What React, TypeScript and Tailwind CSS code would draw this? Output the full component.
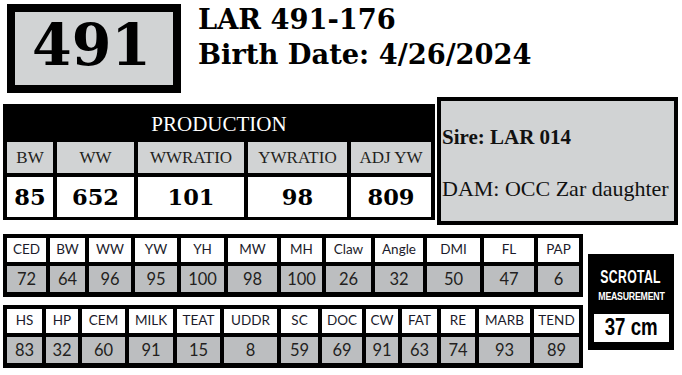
import React from "react";

const t1 = [
  ["CED", "72", 39],
  ["BW", "64", 35],
  ["WW", "96", 42],
  ["YW", "95", 42],
  ["YH", "100", 43],
  ["MW", "98", 49],
  ["MH", "100", 41],
  ["Claw", "26", 45],
  ["Angle", "32", 48],
  ["DMI", "50", 53],
  ["FL", "47", 50],
  ["PAP", "6", 41],
] as const;

const t2 = [
  ["HS", "83", 35],
  ["HP", "32", 32],
  ["CEM", "60", 43],
  ["MILK", "91", 44],
  ["TEAT", "15", 43],
  ["UDDR", "8", 53],
  ["SC", "59", 37],
  ["DOC", "69", 40],
  ["CW", "91", 32],
  ["FAT", "63", 35],
  ["RE", "74", 34],
  ["MARB", "93", 51],
  ["TEND", "89", 45],
] as const;

const prod = [
  ["BW", "85", 46],
  ["WW", "652", 77],
  ["WWRATIO", "101", 106],
  ["YWRATIO", "98", 99],
  ["ADJ YW", "809", 80],
] as const;

function EpdTable({ rows }: { rows: readonly (readonly [string, string, number])[] }) {
  return (
    <div
      className="grid bg-black px-[4px] pt-[4px] pb-[5px] gap-x-[4px] gap-y-[4px] grid-rows-[24px_26px] grid-flow-col font-['Lato',sans-serif]"
      style={{ gridTemplateColumns: rows.map((r) => `${r[2]}px`).join(" ") }}
    >
      {rows.map(([h, v]) => (
        <React.Fragment key={h}>
          <div className="bg-white flex items-center justify-center text-[13.5px] text-[#1b1b2b] leading-none">
            {h}
          </div>
          <div className="bg-[#bcbec0] flex items-center justify-center text-[16.5px] text-[#231f20] leading-none">
            {v}
          </div>
        </React.Fragment>
      ))}
    </div>
  );
}

export default function App() {
  return (
    <div className="w-[682px] h-[375px] bg-white overflow-hidden text-black">
      {/* Row 1 */}
      <div className="flex items-start h-[93px]">
        <div className="ml-[7px] mt-[4px] w-[174px] h-[89px] border-[8px] border-black bg-[#d1d3d4] flex items-center justify-center pb-[8px] pr-[5px]">
          <span className="font-['DejaVu_Serif',serif] font-bold text-[57px] leading-none">491</span>
        </div>
        <div className="ml-[17px] mt-[2px] font-['DejaVu_Serif',serif] font-bold text-[27.3px] leading-[35px]">
          <div>LAR 491-176</div>
          <div>Birth Date: 4/26/2024</div>
        </div>
      </div>

      {/* Row 2 */}
      <div className="flex items-start mt-[4px]">
        <div className="ml-[3px] mt-[7px] bg-black px-[4px] pb-[3px]">
          <div className="h-[38px] flex items-center justify-center text-white font-['Liberation_Serif',serif] text-[21px] leading-none pt-[2px]">
            PRODUCTION
          </div>
          <div
            className="grid gap-[4px] grid-rows-[31px_40px] grid-flow-col"
            style={{ gridTemplateColumns: prod.map((r) => `${r[2]}px`).join(" ") }}
          >
            {prod.map(([h, v]) => (
              <React.Fragment key={h}>
                <div className="bg-[#d1d3d4] flex items-center justify-center font-['Liberation_Serif',serif] text-[17px] text-[#231f20] leading-none">
                  {h}
                </div>
                <div className="bg-white flex items-center justify-center font-['DejaVu_Serif',serif] font-bold text-[22.5px] leading-none">
                  {v}
                </div>
              </React.Fragment>
            ))}
          </div>
        </div>
        <div className="ml-[2px] w-[241px] h-[128px] border-4 border-black bg-[#d1d3d4] pl-[1px] pt-[26px] font-['Liberation_Serif',serif] text-[#111]">
          <div className="font-bold text-[21px] leading-[20px]">Sire: LAR 014</div>
          <div className="mt-[32px] text-[22px] leading-[20px] whitespace-nowrap">DAM: OCC Zar daughter</div>
        </div>
      </div>

      {/* Row 3 */}
      <div className="flex items-start mt-[9px]">
        <div className="ml-[3px] flex flex-col gap-[8px]">
          <EpdTable rows={t1} />
          <EpdTable rows={t2} />
        </div>
        <div className="ml-[5px] mt-[20px] w-[86px] h-[96px] bg-black flex flex-col items-center pt-[14px] font-['Liberation_Sans',sans-serif] font-bold">
          <div className="text-white text-[18px] leading-none scale-x-[0.68] scale-y-[1.05] tracking-[0.5px]">SCROTAL</div>
          <div className="mt-[5px] text-white text-[11px] leading-none scale-x-[0.8] scale-y-[1.05] tracking-[-0.3px] whitespace-nowrap">MEASUREMENT</div>
          <div className="mt-[12px] w-[75px] h-[28px] bg-white flex items-center justify-center">
            <span className="text-black text-[22px] leading-none scale-x-[0.85] scale-y-[1.05] whitespace-nowrap">37 cm</span>
          </div>
        </div>
      </div>
    </div>
  );
}
